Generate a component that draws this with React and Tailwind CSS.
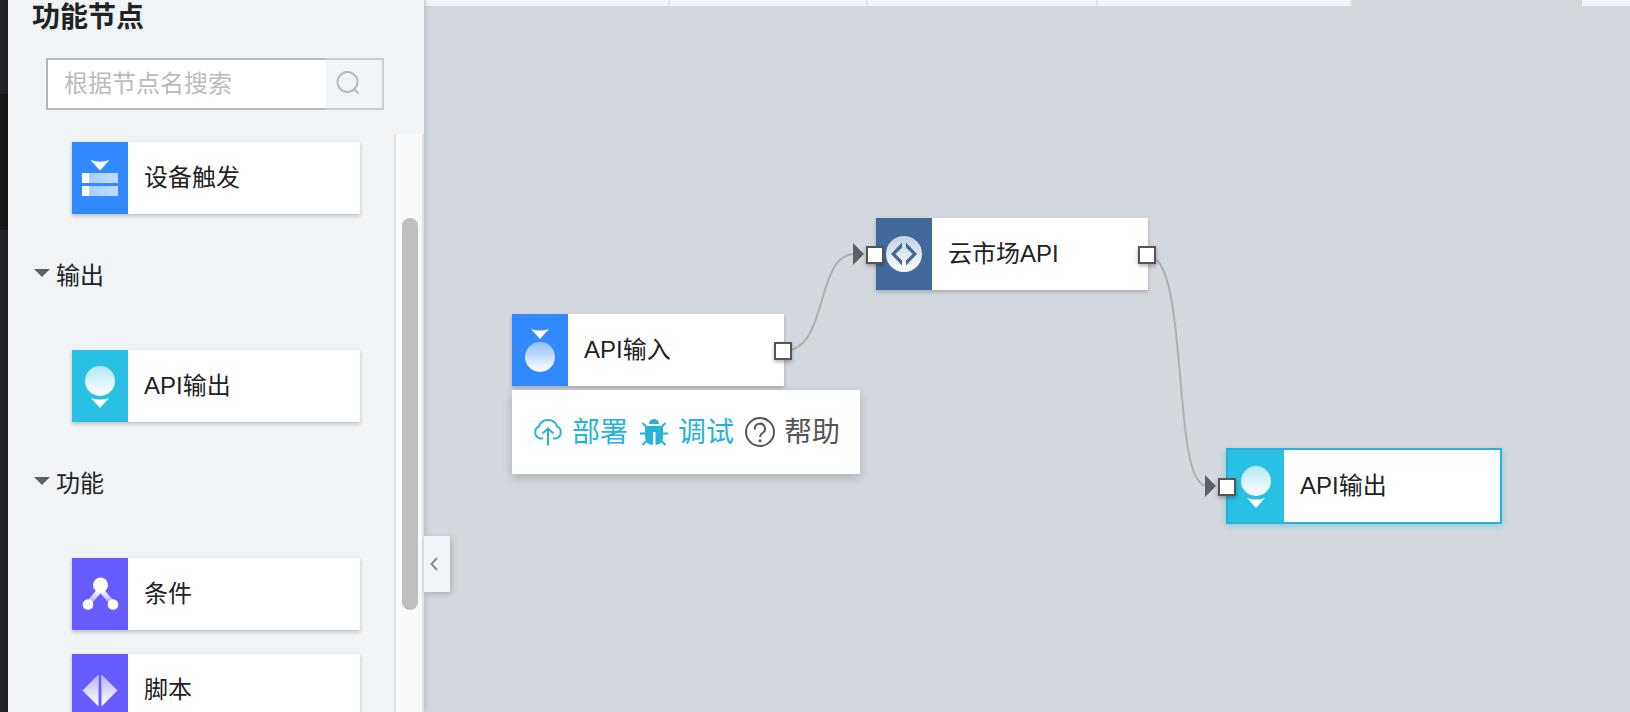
import { useState } from "react";

const outputIcon = (
  <svg viewBox="0 0 56 72" className="h-full w-full" aria-hidden="true">
    <defs>
      <linearGradient id="output-ball" x1="0" y1="0" x2="0" y2="1">
        <stop offset="0" stopColor="#b3e8f5" />
        <stop offset="1" stopColor="#ffffff" />
      </linearGradient>
    </defs>
    <circle cx="28" cy="31" r="15" fill="url(#output-ball)" />
    <path d="M19 48Q28 51 37 48L28 58Z" fill="#fff" />
  </svg>
);

const inputIcon = (
  <svg viewBox="0 0 56 72" className="h-full w-full" aria-hidden="true">
    <defs>
      <linearGradient id="input-ball" x1="0" y1="0" x2="0" y2="1">
        <stop offset="0" stopColor="#8fc0ff" />
        <stop offset="1" stopColor="#ffffff" />
      </linearGradient>
    </defs>
    <path d="M19 15Q28 18 37 15L28 25Z" fill="#fff" />
    <circle cx="28" cy="43" r="15" fill="url(#input-ball)" />
  </svg>
);

const deviceIcon = (
  <svg viewBox="0 0 56 72" className="h-full w-full" aria-hidden="true">
    <defs>
      <linearGradient id="device-bar" x1="0" y1="0" x2="1" y2="0">
        <stop offset="0" stopColor="#a3caff" />
        <stop offset="1" stopColor="#c2dcff" />
      </linearGradient>
    </defs>
    <path d="M18.500 18Q28 21.500 37.500 18L28 28.500Z" fill="#fff" />
    <rect x="10" y="31" width="36" height="10" fill="url(#device-bar)" />
    <rect x="10" y="44" width="36" height="10" fill="url(#device-bar)" />
    <path d="M10 31h7v10h-7zM10 44h7v10h-7z" fill="#fff" />
  </svg>
);

const conditionIcon = (
  <svg viewBox="0 0 56 72" className="h-full w-full" aria-hidden="true">
    <defs>
      <linearGradient id="condition-leg" gradientUnits="userSpaceOnUse" x1="0" y1="32" x2="0" y2="46">
        <stop offset="0" stopColor="#ffffff" />
        <stop offset="1" stopColor="#a8a2ff" />
      </linearGradient>
    </defs>
    <path d="M28 32L16 46M29 32L41 46" stroke="url(#condition-leg)" strokeWidth="5" />
    <circle cx="28.500" cy="27" r="7.500" fill="#fff" />
    <circle cx="16" cy="46.500" r="5.300" fill="#fff" />
    <circle cx="41" cy="46.500" r="5.300" fill="#fff" />
  </svg>
);

const scriptIcon = (
  <svg viewBox="0 0 56 72" className="h-full w-full" aria-hidden="true">
    <defs>
      <linearGradient id="script-half" x1="0" y1="0" x2="0" y2="1">
        <stop offset="0" stopColor="#b9b4ff" />
        <stop offset="1" stopColor="#ffffff" />
      </linearGradient>
    </defs>
    <path d="M26 21V52L10.500 36.500Z" fill="url(#script-half)" />
    <path d="M30 21V52L45.500 36.500Z" fill="url(#script-half)" />
    <path d="M26.500 21V52M29.500 21V52" stroke="#aaa4ff" strokeWidth="1" />
  </svg>
);

const marketIcon = (
  <svg viewBox="0 0 56 72" className="h-full w-full" aria-hidden="true">
    <defs>
      <linearGradient id="market-ball" x1="0" y1="0" x2="0" y2="1">
        <stop offset="0" stopColor="#c3d0e0" />
        <stop offset="1" stopColor="#ffffff" />
      </linearGradient>
    </defs>
    <circle cx="28" cy="36" r="18" fill="url(#market-ball)" />
    <path d="M26 24.500v5l-6.500 6.500 6.500 6.500v5L15 36ZM30 24.500v5l6.500 6.500-6.500 6.500v5l11-11.500Z" fill="#42699b" />
  </svg>
);

const groups = [
  { name: "输出", nodes: [{ label: "API输出", color: "bg-[#2ac0e4]", icon: outputIcon }] },
  {
    name: "功能",
    nodes: [
      { label: "条件", color: "bg-[#665cff]", icon: conditionIcon },
      { label: "脚本", color: "bg-[#665cff]", icon: scriptIcon },
    ],
  },
];

function NodeCard({ label, color, icon, selected }) {
  return (
    <div
      className={`flex shrink-0 items-center bg-white ${
        selected
          ? "h-[76px] border-2 border-[#26b3d9] shadow-[0_2px_6px_rgba(38,179,217,0.4)]"
          : "h-[72px] shadow-[0_2px_4px_rgba(0,0,0,0.22)]"
      }`}
    >
      <span className={`h-full w-14 shrink-0 ${color}`}>{icon}</span>
      <span className="pl-4 text-2xl text-[#222]">{label}</span>
    </div>
  );
}

function Port({ className }) {
  return (
    <span
      className={`absolute size-[18px] border-2 border-[#555] bg-white shadow-[0_2px_4px_rgba(0,0,0,0.3)] ${className}`}
    />
  );
}

function CloudIcon() {
  return (
    <svg viewBox="0 0 32 32" className="size-8" fill="none" stroke="currentColor" strokeWidth="2" aria-hidden="true">
      <path d="M11 22.500H8.500A6.300 6.300 0 0 1 6.800 10.600A9.700 9.700 0 0 1 25.200 10.600A6.300 6.300 0 0 1 23.500 22.500H21" />
      <path d="M16 29.500V13M10.500 17.500L16 12.500L21.500 17.500" />
    </svg>
  );
}

function BugIcon() {
  return (
    <svg viewBox="0 0 32 32" className="size-8" fill="none" stroke="currentColor" strokeWidth="2" aria-hidden="true">
      <path d="M11 8A5 5 0 0 1 21 8Z" fill="currentColor" stroke="none" />
      <path d="M7 10H25V21Q25 28 17.500 29V16H15V29Q7 28 7 21Z" fill="currentColor" stroke="none" />
      <path d="M8 10.500L4.500 7M24 10.500L27.500 7M2 17.500H8M24 17.500H30M8.500 25L4.500 29M23.500 25L27.500 29" />
    </svg>
  );
}

function HelpIcon() {
  return (
    <svg viewBox="0 0 32 32" className="size-8" fill="none" stroke="currentColor" strokeWidth="2" aria-hidden="true">
      <circle cx="16" cy="16" r="14" />
      <path d="M11 13.500A5 5 0 1 1 18.500 17Q16 18.500 16 21" />
      <circle cx="16" cy="24.800" r="1.500" fill="currentColor" stroke="none" />
    </svg>
  );
}

function Sidebar() {
  const [keyword, setKeyword] = useState("");
  const [closed, setClosed] = useState({});

  return (
    <aside className="relative z-10 flex w-[416px] shrink-0 flex-col bg-[#f0f4f7] shadow-[0_0_8px_rgba(0,0,0,0.18)]">
      <h2 className="pl-6 text-[28px] leading-9 font-bold text-[#222]">功能节点</h2>

      <form className="mx-[38px] mt-[22px] flex h-[52px] w-[338px]" onSubmit={(event) => event.preventDefault()}>
        <input
          type="text"
          aria-label="根据节点名搜索"
          value={keyword}
          onChange={(event) => setKeyword(event.target.value)}
          placeholder="根据节点名搜索"
          className="min-w-0 flex-1 border-2 border-r-0 border-[#b4b6b8] bg-white pl-4 text-2xl text-[#222] outline-none placeholder:text-[#bbb]"
        />
        <button type="submit" aria-label="搜索" className="w-[58px] border-2 border-l-0 border-[#cbcdd0] pl-2">
          <svg viewBox="0 0 28 28" className="size-7" fill="none" stroke="#b8babd" strokeWidth="2" aria-hidden="true">
            <circle cx="13.500" cy="12" r="10" />
            <path d="M20 19L24.500 23.500" />
          </svg>
        </button>
      </form>

      <div className="mt-6 flex min-h-0 flex-1">
        <div className="flex-1 overflow-hidden pt-2">
          <div className="mr-[34px] ml-16">
            <NodeCard label="设备触发" color="bg-[#318aff]" icon={deviceIcon} />
          </div>
          {groups.map((group) => (
            <section key={group.name}>
              <h3 className="pt-11 pb-14 pl-6">
                <button
                  type="button"
                  onClick={() => setClosed({ ...closed, [group.name]: !closed[group.name] })}
                  className="flex items-center gap-1 text-2xl leading-9 text-[#222]"
                >
                  <svg viewBox="0 0 20 20" className="size-5" aria-hidden="true">
                    <path d="M2 3H18L10 11Z" fill="#5c6064" />
                  </svg>
                  {group.name}
                </button>
              </h3>
              {!closed[group.name] && (
                <div className="mr-[34px] ml-16 flex flex-col gap-6">
                  {group.nodes.map((node) => (
                    <NodeCard key={node.label} {...node} />
                  ))}
                </div>
              )}
            </section>
          ))}
        </div>
        <div className="w-[30px] border-x-2 border-[#e2e2e2] bg-[#fafafa] pt-[84px] pl-1.5">
          <div className="h-[392px] w-4 rounded-full bg-[#bfbfbf]" />
        </div>
      </div>

      <button
        type="button"
        aria-label="收起"
        className="absolute top-[536px] left-full flex h-14 w-[26px] items-center bg-[#f0f4f7] pl-1 shadow-[2px_2px_6px_rgba(0,0,0,0.18)]"
      >
        <svg viewBox="0 0 16 16" className="size-4" fill="none" stroke="#888b8f" strokeWidth="2" aria-hidden="true">
          <path d="M9 2L3.500 8L9 14" />
        </svg>
      </button>
    </aside>
  );
}

function Canvas() {
  return (
    <main className="relative min-w-0 flex-1 overflow-hidden bg-[#d3d7de]">
      <div className="flex h-1.5">
        <div className="w-[246px] border-x-2 border-[#e2e5e5] bg-[#f0f4f7]" />
        <div className="w-[198px] border-r-2 border-[#e2e5e5] bg-[#f0f4f7]" />
        <div className="w-[230px] border-r-2 border-[#e2e5e5] bg-[#f0f4f7]" />
        <div className="w-[254px] border-r-2 border-[#e2e5e5] bg-[#f0f4f7]" />
        <div className="w-[230px]" />
        <div className="flex-1 bg-[#f0f4f7]" />
      </div>

      <svg className="absolute top-0 left-0 h-[712px] w-[1206px]" viewBox="0 0 1206 712" fill="none" aria-hidden="true">
        <path d="M359 351C406 351 390 254 431 254" stroke="#acaeb1" strokeWidth="2" />
        <path d="M723 255C767 255 746 486 783 486" stroke="#acaeb1" strokeWidth="2" />
        <path d="M429 243V265L440 254ZM781 475V497L792 486Z" fill="#5c6064" />
      </svg>

      <div className="absolute top-[314px] left-[88px] w-[272px]">
        <NodeCard label="API输入" color="bg-[#318aff]" icon={inputIcon} />
        <Port className="top-7 -right-2" />
      </div>

      <div className="absolute top-[390px] left-[88px] flex h-[84px] items-center gap-2.5 bg-white px-5 text-[28px] shadow-[0_4px_10px_rgba(0,0,0,0.18)]">
        <button type="button" className="flex items-center gap-2 whitespace-nowrap text-[#26b3d9]">
          <CloudIcon />
          <span className="pt-0.5">部署</span>
        </button>
        <button type="button" className="flex items-center gap-2 whitespace-nowrap text-[#26b3d9]">
          <BugIcon />
          <span className="pt-0.5">调试</span>
        </button>
        <button type="button" className="flex items-center gap-2 whitespace-nowrap text-[#555]">
          <HelpIcon />
          <span className="pt-0.5">帮助</span>
        </button>
      </div>

      <div className="absolute top-[218px] left-[452px] w-[272px]">
        <NodeCard label="云市场API" color="bg-[#42699b]" icon={marketIcon} />
        <Port className="top-7 -left-2.5" />
        <Port className="top-7 -right-2" />
      </div>

      <div className="absolute top-[448px] left-[802px] w-[276px]">
        <NodeCard label="API输出" color="bg-[#2ac0e4]" icon={outputIcon} selected />
        <Port className="top-[30px] -left-2" />
      </div>
    </main>
  );
}

export default function App() {
  return (
    <div className="flex h-screen overflow-hidden font-['Liberation_Sans','Noto_Sans_CJK_SC',sans-serif]">
      <nav className="w-2 shrink-0 bg-[#232428] pt-[94px]">
        <div className="h-[136px] bg-[#17181a]" />
      </nav>
      <Sidebar />
      <Canvas />
    </div>
  );
}
